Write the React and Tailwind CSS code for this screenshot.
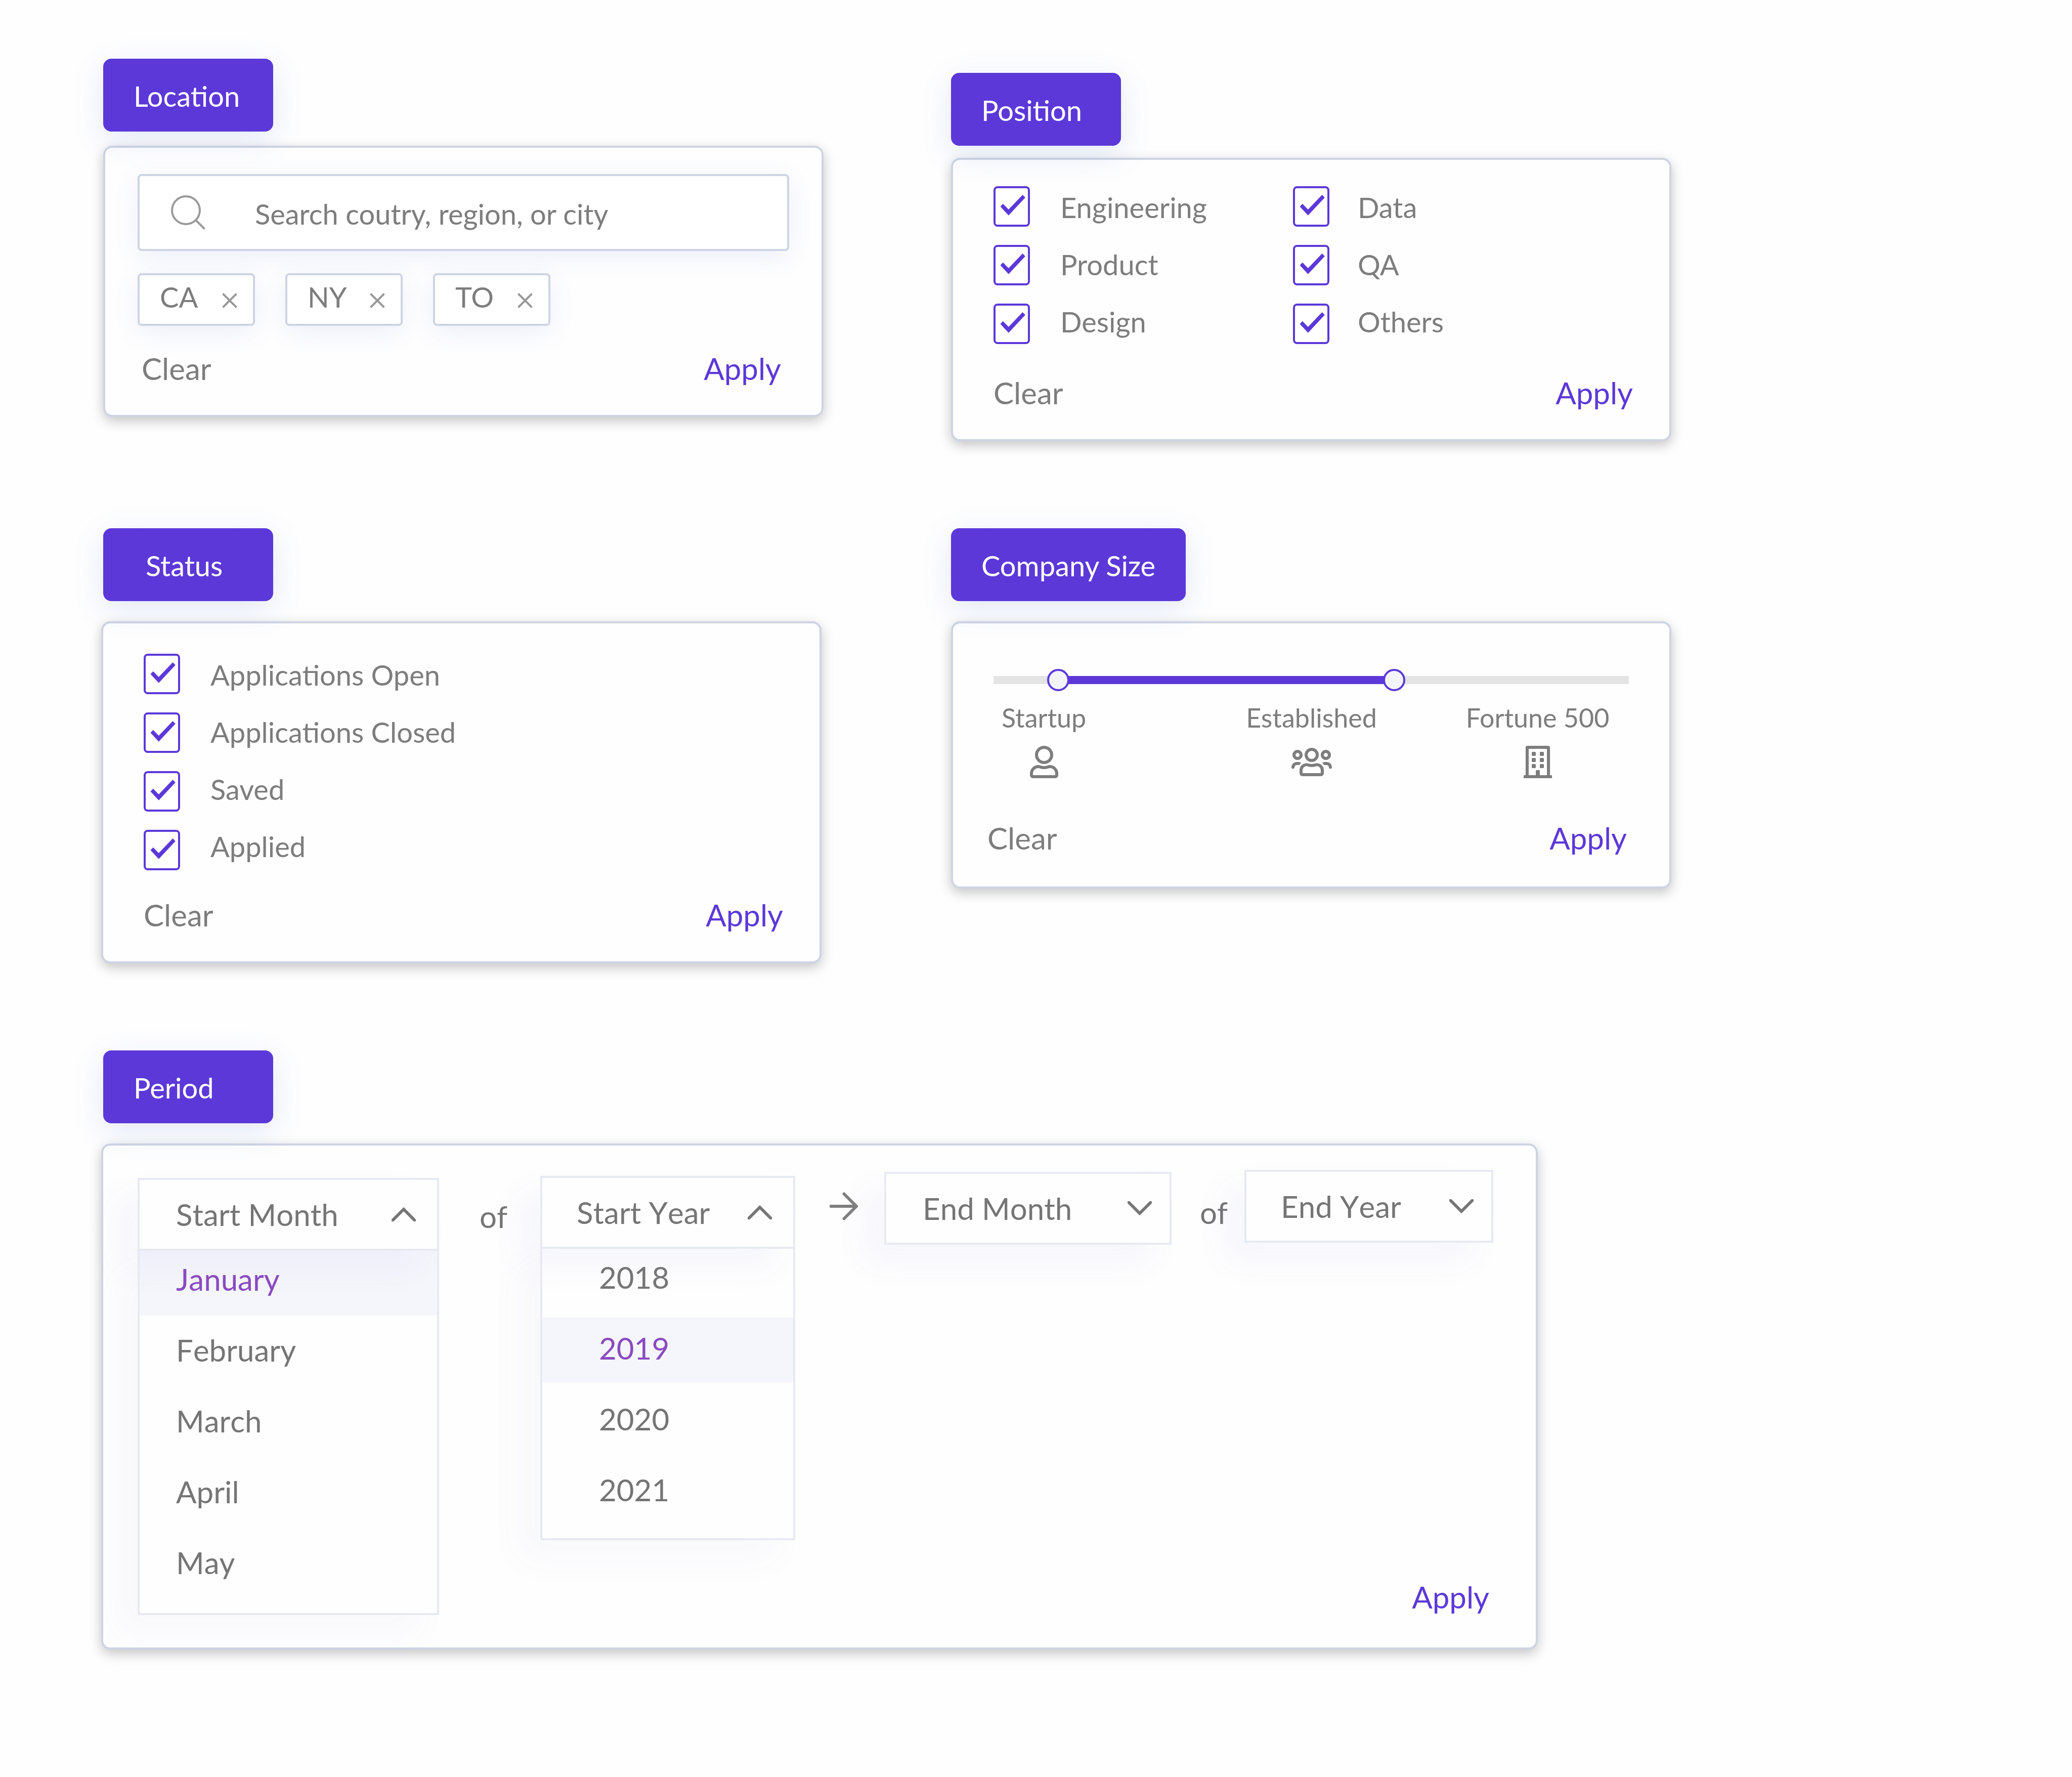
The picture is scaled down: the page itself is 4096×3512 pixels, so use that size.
import { useState } from "react";
import { FaRegUser, FaRegBuilding } from "react-icons/fa";

const MONTHS = ["January", "February", "March", "April", "May"];
const YEARS = ["2018", "2019", "2020", "2021"];

function Title({ children, className }) {
  return (
    <button
      type="button"
      className={`relative z-10 block rounded-[16px] bg-[#5c38d9] pt-[36px] pb-[32px] pr-[40px] text-left text-[56px] leading-[76px] whitespace-nowrap text-white shadow-[0_16px_60px_rgba(70,110,210,0.15)] ${className}`}
    >
      {children}
    </button>
  );
}

function Card({ children, className }) {
  return (
    <div
      className={`flex flex-col rounded-[18px] border-4 border-[#ced4e3] bg-[#fefefe] shadow-[0_8px_24px_rgba(0,0,0,0.23)] ${className}`}
    >
      {children}
    </div>
  );
}

function Footer({ clear = true, className }) {
  return (
    <div className={`mt-auto flex justify-between text-[60px] leading-[72px] ${className}`}>
      {clear ? <button type="button">Clear</button> : <span />}
      <button type="button" className="text-[#5c38d9]">
        Apply
      </button>
    </div>
  );
}

function Tick({ id }) {
  const [on, setOn] = useState(true);
  return (
    <span className="relative block h-[80px] w-[72px]">
      <input
        id={id}
        type="checkbox"
        checked={on}
        onChange={() => setOn(!on)}
        className="block h-full w-full appearance-none rounded-[8px] border-4 border-[#5c38d9] bg-white"
      />
      {on && (
        <svg viewBox="0 0 72 80" className="pointer-events-none absolute inset-0" aria-hidden="true">
          <path d="M13.5 40.2 18.8 34.8 29.8 46 57.5 17.1 62.8 22.5 29.8 57.8Z" fill="#5c38d9" />
        </svg>
      )}
    </span>
  );
}

function CheckList({ items, className }) {
  return (
    <div className={`flex ${className}`}>
      <div className="flex flex-col gap-[36px]">
        {items.map((t) => (
          <Tick key={t} id={t.replace(" ", "-")} />
        ))}
      </div>
      <div className="mt-[4px] flex flex-col gap-[37px] text-[56px] leading-[76px] whitespace-nowrap">
        {items.map((t) => (
          <label key={t} htmlFor={t.replace(" ", "-")}>
            {t}
          </label>
        ))}
      </div>
    </div>
  );
}

function Chip({ label }) {
  return (
    <span className="flex h-[104px] w-[232px] items-center justify-between rounded-[8px] border-4 border-[#ced4e3] bg-white pr-[31px] pl-[40px] text-[56px] leading-[76px] shadow-[0_12px_48px_rgba(70,110,210,0.1)]">
      <span className="mb-[10px]">{label}</span>
      <button type="button" aria-label={`Remove ${label}`}>
        <svg viewBox="0 0 30 30" className="mt-[4px] block h-[30px] w-[30px]" aria-hidden="true">
          <path d="M1.5 1.5 28.5 28.5M28.5 1.5 1.5 28.5" stroke="#999" strokeWidth="4" fill="none" />
        </svg>
      </button>
    </span>
  );
}

function Chevron({ up }) {
  return (
    <svg viewBox="0 0 48 28" className="block h-[28px] w-[48px]" aria-hidden="true">
      <path
        d={up ? "M2.5 25.5 24 4 45.5 25.5" : "M2.5 2.5 24 24 45.5 2.5"}
        stroke="#757575"
        strokeWidth="6"
        strokeLinecap="round"
        fill="none"
      />
    </svg>
  );
}

function Dropdown({ label, options, initial, className, headClass, listClass, itemClass }) {
  const [value, setValue] = useState(initial);
  return (
    <div className={`relative ${className}`}>
      <button
        type="button"
        aria-haspopup="listbox"
        aria-expanded="true"
        className={`flex h-[144px] w-full items-center justify-between border-4 border-[#e7eaf2] bg-[#fefefe] pr-[42px] shadow-[-40px_36px_64px_rgba(90,100,210,0.05)] ${headClass}`}
      >
        {label}
        <Chevron up />
      </button>
      <ul
        role="listbox"
        aria-label={label}
        className={`absolute inset-x-0 top-full flex flex-col gap-[12px] border-4 border-t-0 border-[#e7eaf2] pb-[28px] shadow-[-40px_36px_64px_rgba(90,100,210,0.04)] ${listClass}`}
      >
        {options.map((o) => (
          <li
            key={o}
            role="option"
            aria-selected={o === value}
            onClick={() => setValue(o)}
            className={`${itemClass} ${o === value ? "bg-[#4664c0]/5 text-[#8a4ac0]" : ""}`}
          >
            {o}
          </li>
        ))}
      </ul>
    </div>
  );
}

function Select({ label, options, className, padClass }) {
  return (
    <div className={`relative h-[144px] ${className}`}>
      <select
        aria-label={label}
        defaultValue=""
        className={`block h-full w-full appearance-none border-4 border-[#e7eaf2] bg-[#fefefe] shadow-[-40px_36px_64px_rgba(90,100,210,0.05)] ${padClass}`}
      >
        <option value="">{label}</option>
        {options.map((o) => (
          <option key={o}>{o}</option>
        ))}
      </select>
      <span className="pointer-events-none absolute inset-y-0 right-[39px] flex items-center">
        <Chevron />
      </span>
    </div>
  );
}

function UsersIcon() {
  return (
    <svg viewBox="0 0 640 512" fill="currentColor" className="block h-[64px] w-[80px]" aria-hidden="true">
      <path d="M544 224c44.2 0 80-35.8 80-80s-35.8-80-80-80-80 35.8-80 80 35.8 80 80 80zm0-112c17.6 0 32 14.4 32 32s-14.4 32-32 32-32-14.4-32-32 14.4-32 32-32zM96 224c44.2 0 80-35.8 80-80s-35.8-80-80-80-80 35.8-80 80 35.8 80 80 80zm0-112c17.6 0 32 14.4 32 32s-14.4 32-32 32-32-14.4-32-32 14.4-32 32-32zm396.4 210.9c-27.5-40.8-80.7-56-127.8-41.7-14.2 4.3-29.1 6.7-44.7 6.7s-30.5-2.4-44.7-6.7c-47.1-14.3-100.3.8-127.8 41.7-12.4 18.4-19.6 40.5-19.6 64.3V432c.2 26.4 21.7 48 48.2 48h288c26.4 0 48-21.5 48-48v-44.8c.2-23.8-7-45.9-19.4-64.3zM464 432H176v-44.8c0-36.4 29.2-66.2 65.4-67.2 25.5 10.6 51.9 16 78.6 16 26.7 0 53.1-5.4 78.6-16 36.2 1 65.4 30.7 65.4 67.2V432zm92-176h-24c-17.3 0-33.4 5.3-46.8 14.3 13.4 10.1 25.2 22.2 34.4 36.2 3.9-1.4 8-2.5 12.3-2.5h24c19.8 0 36 16.2 36 36 0 13.2 10.8 24 24 24s24-10.8 24-24c.1-46.3-37.6-84-83.9-84zm-236 0c61.9 0 112-50.1 112-112S381.9 32 320 32 208 82.1 208 144s50.1 112 112 112zm0-176c35.3 0 64 28.7 64 64s-28.7 64-64 64-64-28.7-64-64 28.7-64 64-64zM154.8 270.3c-13.4-9-29.5-14.3-46.8-14.3H84c-46.3 0-84 37.7-84 84 0 13.2 10.8 24 24 24s24-10.8 24-24c0-19.8 16.2-36 36-36h24c4.4 0 8.5 1.1 12.3 2.5 9.3-14 21.1-26.1 34.5-36.2z" />
    </svg>
  );
}

const RANGE =
  "pointer-events-none absolute inset-0 block h-[44px] w-full appearance-none bg-transparent [&::-webkit-slider-thumb]:pointer-events-auto [&::-webkit-slider-thumb]:h-[44px] [&::-webkit-slider-thumb]:w-[44px] [&::-webkit-slider-thumb]:appearance-none [&::-webkit-slider-thumb]:rounded-full [&::-webkit-slider-thumb]:border-4 [&::-webkit-slider-thumb]:border-[#5c38d9] [&::-webkit-slider-thumb]:bg-[#f3f4fa]";

function SizeSlider() {
  const max = 400;
  const [low, setLow] = useState(35);
  const [high, setHigh] = useState(254);
  return (
    <div className="relative flex h-[44px] items-center">
      <div className="h-[16px] w-full bg-[#e4e4e4] px-[22px]">
        <div
          className="h-full bg-[#5c38d9]"
          style={{ marginLeft: `${(low / max) * 100}%`, width: `${((high - low) / max) * 100}%` }}
        />
      </div>
      <input
        type="range"
        aria-label="Smallest company size"
        max={max}
        value={low}
        onChange={(e) => setLow(Math.min(+e.target.value, high))}
        className={RANGE}
      />
      <input
        type="range"
        aria-label="Largest company size"
        max={max}
        value={high}
        onChange={(e) => setHigh(Math.max(+e.target.value, low))}
        className={RANGE}
      />
    </div>
  );
}

export default function App() {
  return (
    <main className="min-h-screen bg-[#fefefe] px-[200px] pt-[116px] pb-[200px] font-['Lato',sans-serif] text-[#7d7d7d]">
      <div className="flex items-start gap-[252px]">
        <section className="ml-[4px] w-full max-w-[1424px]">
          <Title className="w-[336px] pl-[60px]">Location</Title>
          <Card className="mt-[28px] min-h-[536px]">
            <label className="mx-[64px] mt-[52px] flex h-[152px] items-center rounded-[8px] border-4 border-[#ced4e3] bg-white pl-[62px] shadow-[0_12px_48px_rgba(70,110,210,0.1)]">
              <svg viewBox="0 0 68 68" className="block h-[68px] w-[68px]" aria-hidden="true">
                <g fill="none" stroke="#999" strokeWidth="4">
                  <circle cx="29.5" cy="29.5" r="27.5" />
                  <path d="M49 49 66.5 66.5" />
                </g>
              </svg>
              <input
                type="text"
                aria-label="Search location"
                placeholder="Search coutry, region, or city"
                className="mt-[6px] ml-[98px] min-w-0 flex-1 bg-transparent text-[56px] leading-[76px] outline-none placeholder:text-[#7d7d7d]"
              />
            </label>
            <div className="mx-[64px] mt-[44px] flex gap-[60px]">
              <Chip label="CA" />
              <Chip label="NY" />
              <Chip label="TO" />
            </div>
            <Footer className="pr-[80px] pb-[56px] pl-[72px]" />
          </Card>
        </section>

        <section className="mt-[28px] w-full max-w-[1424px]">
          <Title className="w-[336px] pl-[60px]">Position</Title>
          <Card className="mt-[24px] min-h-[560px]">
            <div className="mt-[52px] ml-[80px] flex">
              <CheckList items={["Engineering", "Product", "Design"]} className="w-[592px] gap-[60px]" />
              <CheckList items={["Data", "QA", "Others"]} className="gap-[56px]" />
            </div>
            <Footer className="pr-[72px] pb-[56px] pl-[80px]" />
          </Card>
        </section>
      </div>

      <div className="mt-[172px] flex items-start gap-[256px]">
        <section className="w-full max-w-[1424px]">
          <Title className="ml-[4px] w-[336px] pl-[84px]">Status</Title>
          <Card className="mt-[40px] min-h-[676px]">
            <CheckList
              items={["Applications Open", "Applications Closed", "Saved", "Applied"]}
              className="mt-[60px] ml-[80px] gap-[60px]"
            />
            <Footer className="pr-[72px] pb-[56px] pl-[80px]" />
          </Card>
        </section>

        <section className="w-full max-w-[1424px]">
          <Title className="w-[464px] pl-[60px]">Company Size</Title>
          <Card className="mt-[40px] min-h-[528px]">
            <div className="mt-[90px] mr-[80px] ml-[80px]">
              <SizeSlider />
              <div className="mt-[20px] flex text-[52px] leading-[64px] whitespace-nowrap">
                <div className="ml-[16px] flex flex-col items-center gap-[24px]">
                  Startup
                  <FaRegUser className="h-[64px] w-[56px]" />
                </div>
                <div className="ml-[316px] flex flex-col items-center gap-[24px]">
                  Established
                  <UsersIcon />
                </div>
                <div className="ml-[176px] flex flex-col items-center gap-[24px]">
                  Fortune 500
                  <FaRegBuilding className="h-[64px] w-[56px]" />
                </div>
              </div>
            </div>
            <Footer className="pr-[84px] pb-[60px] pl-[68px]" />
          </Card>
        </section>
      </div>

      <section className="mt-[172px] w-full max-w-[2840px]">
        <Title className="ml-[4px] w-[336px] pl-[60px]">Period</Title>
        <Card className="mt-[40px] min-h-[1000px] text-[#757575]">
          <div className="flex items-start pl-[68px] text-[60px] leading-[72px] [font-kerning:none]">
            <Dropdown
              label="Start Month"
              options={MONTHS}
              initial="January"
              className="mt-[64px] w-[596px]"
              headClass="pl-[72px]"
              itemClass="pt-[20px] pb-[36px] pl-[72px]"
            />
            <span className="mt-[104px] ml-[80px] w-[56px]">of</span>
            <Dropdown
              label="Start Year"
              options={YEARS}
              initial="2019"
              className="mt-[60px] ml-[64px] w-[504px]"
              headClass="pl-[68px]"
              listClass="-mt-[4px]"
              itemClass="pt-[24px] pb-[32px] pl-[112px]"
            />
            <svg viewBox="0 0 56 56" className="mt-[92px] ml-[68px] block h-[56px] w-[56px]" aria-hidden="true">
              <path
                d="M2.5 28H52M28.5 3.5 53 28 28.5 52.5"
                stroke="#7f7f7f"
                strokeWidth="6"
                strokeLinecap="round"
                strokeLinejoin="round"
                fill="none"
              />
            </svg>
            <Select label="End Month" options={MONTHS} className="mt-[52px] ml-[52px] w-[568px]" padClass="pl-[72px]" />
            <span className="mt-[96px] ml-[56px] w-[56px]">of</span>
            <Select label="End Year" options={YEARS} className="mt-[48px] ml-[32px] w-[492px]" padClass="pl-[68px]" />
          </div>
          <Footer clear={false} className="pr-[92px] pb-[64px]" />
        </Card>
      </section>
    </main>
  );
}
